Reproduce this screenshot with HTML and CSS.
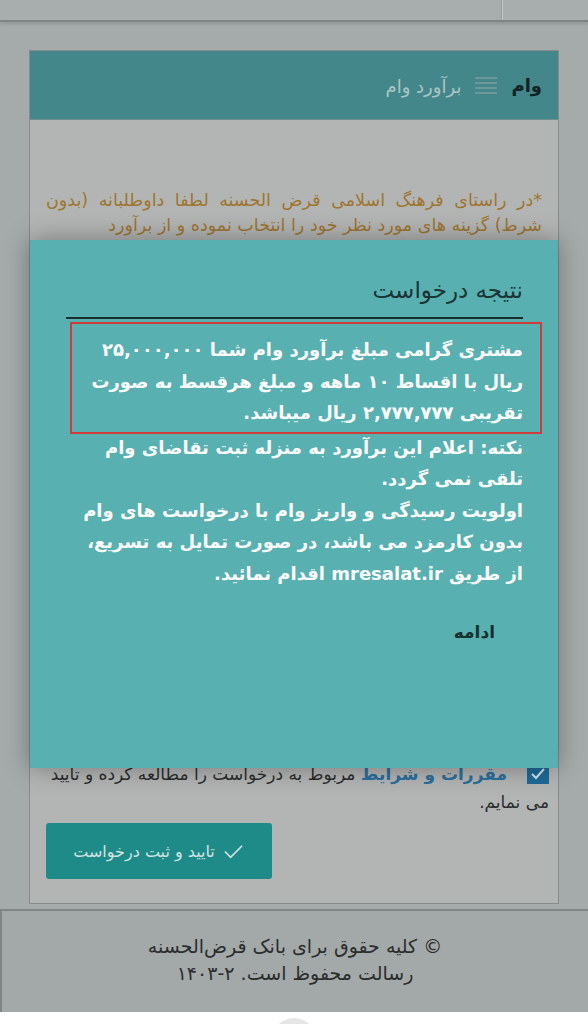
FILE: index.html
```html
<!DOCTYPE html>
<html lang="fa" dir="rtl">
<head>
<meta charset="utf-8">
<title>برآورد وام</title>
<link rel="stylesheet" href="styles.css">
</head>
<body>
<div class="topbar"><div class="topbar-side"></div></div>
<main class="main">
  <section class="card">
    <header class="card-header">
      <span class="brand">وام</span>
      <span class="menu-icon"><i></i><i></i><i></i><i></i></span>
      <span class="crumb">برآورد وام</span>
    </header>
    <div class="card-body">
      <p class="intro">*در راستای فرهنگ اسلامی قرض الحسنه لطفا داوطلبانه (بدون شرط) گزینه های مورد نظر خود را انتخاب نموده و از برآورد</p>
      <div class="fields"></div>
      <label class="terms"><span class="checkbox"><svg viewBox="0 0 22 20" width="22" height="20"><polyline points="5,10 9,14 17,5" fill="none" stroke="#d8e6ee" stroke-width="2"/></svg></span><a class="terms-link">مقررات و شرایط</a> مربوط به درخواست را مطالعه کرده و تایید می نمایم.</label>
      <button class="submit"><svg viewBox="0 0 24 24" width="23" height="23"><polyline points="3,12 9,18 21,6" fill="none" stroke="#cfe3e2" stroke-width="1.8"/></svg><span>تایید و ثبت درخواست</span></button>
    </div>
  </section>
</main>
<footer class="footer">
  <p>© کلیه حقوق برای بانک قرض‌الحسنه<br>رسالت محفوظ است. <span dir="ltr">۱۴۰۳-۲</span></p>
</footer>
<div class="bottom-strip"><span class="fab"></span></div>

<div class="modal">
  <h2 class="modal-title">نتیجه درخواست</h2>
  <p class="msg msg-main">مشتری گرامی مبلغ برآورد وام شما ۲۵,۰۰۰,۰۰۰ ریال با اقساط ۱۰ ماهه و مبلغ هرقسط به صورت تقریبی ۲,۷۷۷,۷۷۷ ریال میباشد.</p>
  <p class="msg">نکته: اعلام این برآورد به منزله ثبت تقاضای وام تلقی نمی گردد.<br>اولویت رسیدگی و واریز وام با درخواست های وام بدون کارمزد می باشد، در صورت تمایل به تسریع، از طریق mresalat.ir اقدام نمائید.</p>
  <div class="modal-actions"><button class="continue">ادامه</button></div>
  <div class="highlight"></div>
</div>
</body>
</html>
```
FILE: styles.css
```css
* { box-sizing: border-box; }
html, body { margin: 0; padding: 0; }
body {
  width: 588px;
  height: 1024px;
  overflow: hidden;
  background: #a5abab;
  font-family: "DejaVu Sans", sans-serif;
  position: relative;
}
.topbar {
  height: 22px;
  background: #a8adad;
  border-bottom: 2px solid #7e8383;
  box-shadow: 0 2px 3px rgba(0,0,0,0.12);
  display: flex;
  justify-content: flex-start;
}
.topbar-side {
  width: 86px;
  height: 20px;
  border-left: 1px solid #c4c8c8;
  box-shadow: -1px 0 0 #959a9a;
}
.main {
  padding: 28px 29px 0 29px;
}
.card {
  border: 1px solid #868b8b;
  background: #b3b5b5;
  height: 854px;
  display: flex;
  flex-direction: column;
}
.card-header {
  height: 69px;
  background: #44878a;
  border-bottom: 1px solid #6f8f90;
  display: flex;
  align-items: center;
  padding: 0 16px 0 16px;
  gap: 14px;
}
.brand {
  font-weight: bold;
  font-size: 18px;
  color: #0f2323;
}
.menu-icon {
  display: flex;
  flex-direction: column;
  gap: 3px;
  width: 22px;
}
.menu-icon i {
  display: block;
  height: 2px;
  background: #6c9899;
}
.crumb {
  font-size: 18px;
  color: #a9c6c6;
  margin-top: 3px;
}
.card-body {
  flex: 1;
  padding: 68px 16px 0 16px;
  display: flex;
  flex-direction: column;
}
.intro {
  margin: 0;
  color: #9e7530;
  font-size: 17.5px;
  line-height: 25px;
  text-align: justify;
}
.fields {
  height: 522px;
}
.terms {
  display: block;
  margin: 0 -7px;
  font-size: 17px;
  line-height: 28px;
  color: #2a2c2c;
}
.checkbox {
  display: inline-block;
  width: 22px;
  height: 20px;
  background: #1e6b98;
  vertical-align: -4px;
  margin-left: 20px;
}
.checkbox svg { display: block; }
.terms-link {
  color: #2b6f9c;
  font-weight: bold;
}
.submit {
  align-self: flex-end;
  margin-top: 7px;
  width: 226px;
  height: 56px;
  border: none;
  border-radius: 3px;
  background: #1f8b89;
  color: #cfe3e2;
  font-family: "DejaVu Sans", sans-serif;
  font-size: 16px;
  display: flex;
  align-items: center;
  justify-content: center;
  gap: 7px;
  padding: 0;
}
.submit svg { display: block; }
.footer {
  margin-top: 5px;
  height: 103px;
  background: #a3a8a8;
  border-top: 2px solid #7f8484;
  border-left: 2px solid #7f8484;
  display: flex;
  align-items: center;
  justify-content: center;
}
.footer p {
  margin: 0 0 4px 0;
  text-align: center;
  font-size: 19px;
  line-height: 27px;
  color: #2b2d2d;
}
.bottom-strip {
  height: 20px;
  background: #ffffff;
  position: relative;
  overflow: hidden;
}
.fab {
  position: absolute;
  left: 272px;
  top: 6px;
  width: 44px;
  height: 44px;
  border-radius: 50%;
  background: #e6e6e6;
}
.modal {
  position: absolute;
  left: 30px;
  top: 240px;
  width: 528px;
  height: 528px;
  background: #58b0b1;
  box-shadow: 0 0 24px rgba(0,0,0,0.35);
  padding: 30px 35px 0 36px;
  color: #fbfdfd;
}
.modal-title {
  margin: 0;
  font-size: 23px;
  font-weight: normal;
  line-height: 40px;
  color: #1b3434;
  padding-bottom: 7px;
  border-bottom: 2px solid #1a2c2c;
}
.msg {
  margin: 0;
  font-size: 18px;
  font-weight: bold;
  line-height: 31.5px;
}
.msg-main {
  margin-top: 15px;
  margin-bottom: 3px;
}
.modal-actions {
  display: flex;
  padding-right: 28px;
  margin-top: 28px;
}
.continue {
  border: none;
  background: none;
  padding: 0;
  font-family: "DejaVu Sans", sans-serif;
  font-weight: bold;
  font-size: 17px;
  line-height: 30px;
  color: #16302f;
}
.highlight {
  position: absolute;
  left: 40px;
  top: 82px;
  width: 472px;
  height: 112px;
  border: 2px solid #cf3a3a;
  pointer-events: none;
}
```
